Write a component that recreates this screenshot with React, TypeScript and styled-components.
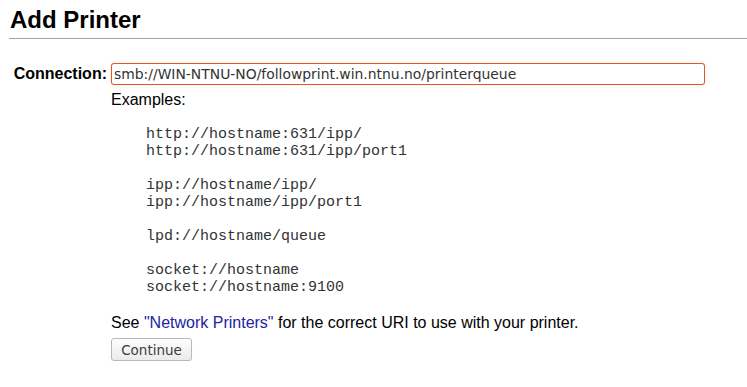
import React from 'react'
import styled, { createGlobalStyle } from 'styled-components'

const GlobalStyle = createGlobalStyle`
  body {
    margin: 0;
    background: #fff;
    color: #000;
    font-family: "Liberation Sans", Arial, sans-serif;
    font-size: 16px;
  }
`

const Page = styled.div`
  padding: 0 0 0 9px;
`

const Title = styled.h2`
  margin: 0;
  padding: 7px 0 5px 1px;
  font-size: 24px;
  line-height: 26px;
  font-weight: bold;
  border-bottom: 1px solid #a0a0a0;
`

const Form = styled.div`
  display: grid;
  grid-template-columns: 98px 1fr;
  column-gap: 4px;
  margin-top: 24px;
`

const Label = styled.label`
  text-align: right;
  font-weight: bold;
  padding-top: 2px;
  line-height: 18px;
`

const Field = styled.div`
  display: flex;
  flex-direction: column;
  align-items: flex-start;
`

const UriInput = styled.input`
  box-sizing: border-box;
  width: 594px;
  height: 22px;
  margin: 0;
  padding: 0 2px;
  border: 1px solid #e0592d;
  border-radius: 3px;
  outline: none;
  font-family: "DejaVu Sans", "Open Sans", sans-serif;
  font-size: 13.9px;
  color: #333;
  box-shadow: 0 0 1px #f0a080;
`

const Note = styled.p`
  margin: 6px 0 0;
  line-height: 18px;
`

const Examples = styled.pre`
  margin: 17px 0 0 35px;
  font-family: "Liberation Mono", "Courier New", monospace;
  font-size: 15px;
  line-height: 17px;
  color: #333;
`

const Hint = styled.p`
  margin: 18px 0 0;
  line-height: 18px;
`

const Link = styled.a`
  color: #2323a3;
  text-decoration: none;
`

const Button = styled.button`
  margin-top: 6px;
  width: 81px;
  height: 23px;
  padding: 0;
  border: 1px solid #b8b8b8;
  border-radius: 3px;
  background: linear-gradient(#fdfdfd, #ecebea);
  box-shadow: 0 1px 1px rgba(0, 0, 0, 0.08);
  font-family: "DejaVu Sans", "Open Sans", sans-serif;
  font-size: 13.5px;
  color: #3c3c3c;
`

const examples = `http://hostname:631/ipp/
http://hostname:631/ipp/port1

ipp://hostname/ipp/
ipp://hostname/ipp/port1

lpd://hostname/queue

socket://hostname
socket://hostname:9100`

const App: React.FC = () => (
  <Page>
    <GlobalStyle />
    <Title>Add Printer</Title>
    <Form>
      <Label htmlFor="uri">Connection:</Label>
      <Field>
        <UriInput
          id="uri"
          defaultValue="smb://WIN-NTNU-NO/followprint.win.ntnu.no/printerqueue"
        />
        <Note>Examples:</Note>
        <Examples>{examples}</Examples>
        <Hint>
          See <Link href="#">"Network Printers"</Link> for the correct URI to use with your printer.
        </Hint>
        <Button>Continue</Button>
      </Field>
    </Form>
  </Page>
)

export default App
